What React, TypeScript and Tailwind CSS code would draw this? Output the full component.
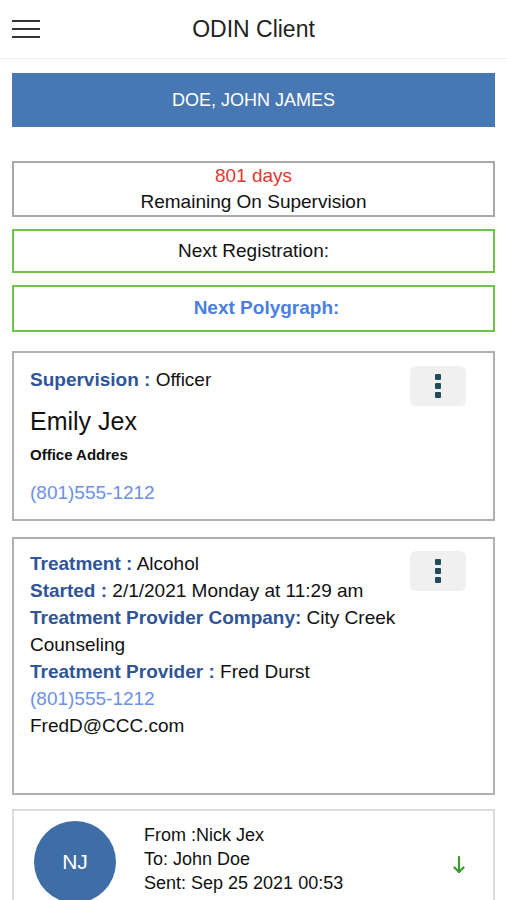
const KebabButton = () => (
  <button className="w-14 h-10 rounded-md bg-[#f0f0f0] flex items-center justify-center">
    <span className="flex flex-col gap-[3px]">
      <span className="w-[6px] h-[6px] bg-[#1f4d5c] rounded-[1px]" />
      <span className="w-[6px] h-[6px] bg-[#1f4d5c] rounded-[1px]" />
      <span className="w-[6px] h-[6px] bg-[#1f4d5c] rounded-[1px]" />
    </span>
  </button>
);

const Label = ({ children }: { children: React.ReactNode }) => (
  <span className="font-bold text-[#2f5597]">{children}</span>
);

export default function App() {
  return (
    <div className="min-h-[900px] bg-white font-['Liberation_Sans',Arial,sans-serif] text-[#111] overflow-hidden">
      {/* Header */}
      <header className="h-[59px] border-b border-[#ececec] flex items-center relative">
        <button className="absolute left-3 top-[20px] flex flex-col gap-[6px]">
          <span className="block w-[28px] h-[2px] bg-[#333]" />
          <span className="block w-[28px] h-[2px] bg-[#333]" />
          <span className="block w-[28px] h-[2px] bg-[#333]" />
        </button>
        <h1 className="w-full text-center text-[23px] text-[#222]">ODIN Client</h1>
      </header>

      <main className="px-3">
        {/* Client name */}
        <div className="mt-[14px] h-[54px] bg-[#4878b4] flex items-center justify-center text-white text-[18px]">
          DOE, JOHN JAMES
        </div>

        {/* Supervision remaining */}
        <div className="mt-[34px] h-[56px] border-2 border-[#a8a8a8] flex flex-col items-center justify-center text-[19px] leading-[26px]">
          <span className="text-[#e03a32]">801 days</span>
          <span>Remaining On Supervision</span>
        </div>

        <div className="mt-[12px] h-[44px] border-2 border-[#6cc44a] flex items-center justify-center text-[19px]">
          Next Registration:
        </div>

        <div className="mt-[12px] h-[47px] border-2 border-[#6cc44a] flex items-center justify-center pl-[26px] text-[19px] font-bold text-[#4a7fe0]">
          Next Polygraph:
        </div>

        {/* Officer card */}
        <div className="mt-[19px] h-[170px] border-2 border-[#b0b0b0] flex justify-between pl-[16px] pr-[27px] pt-[13px]">
          <div className="pt-[3px]">
            <div className="text-[19px] leading-[22px]">
              <Label>Supervision :</Label> Officer
            </div>
            <div className="mt-[17px] text-[25px] leading-[26px]">Emily Jex</div>
            <div className="mt-[12px] text-[15px] font-bold leading-[18px]">Office Addres</div>
            <div className="mt-[18px] text-[19px] leading-[22px] text-[#6b90e6]">(801)555-1212</div>
          </div>
          <KebabButton />
        </div>

        {/* Treatment card */}
        <div className="mt-[16px] h-[258px] border-2 border-[#b0b0b0] flex justify-between pl-[16px] pr-[27px] pt-[12px]">
          <div className="text-[19px] leading-[27px] -mt-[1px]">
            <div>
              <Label>Treatment :</Label> Alcohol
            </div>
            <div>
              <Label>Started :</Label> 2/1/2021 Monday at 11:29 am
            </div>
            <div className="w-[372px]">
              <Label>Treatment Provider Company:</Label> City Creek Counseling
            </div>
            <div>
              <Label>Treatment Provider :</Label> Fred Durst
            </div>
            <div className="text-[#6b90e6]">(801)555-1212</div>
            <div>FredD@CCC.com</div>
          </div>
          <div className="shrink-0">
            <KebabButton />
          </div>
        </div>

        {/* Message card */}
        <div className="mt-[14px] border-2 border-b-0 border-[#dcdcdc] flex items-start pl-[20px] pr-[28px] pt-[10px]">
          <div className="w-[82px] h-[82px] rounded-full bg-[#3f6ea6] flex items-center justify-center text-white text-[21px] shrink-0">
            NJ
          </div>
          <div className="ml-[28px] flex-1 text-[18px] leading-[24px] mt-[2px]">
            <div>From :Nick Jex</div>
            <div>To: John Doe</div>
            <div>Sent: Sep 25 2021 00:53</div>
            <div className="text-[#4caf3a]">Testing Testing</div>
          </div>
          <div className="self-center mt-[-10px] text-[#3a9a2e]">
            <svg width="12" height="18" viewBox="0 0 12 18" fill="none" stroke="currentColor" strokeWidth="2.2" strokeLinecap="round" strokeLinejoin="round">
              <path d="M6 1v15" />
              <path d="M1.5 11.5 6 16l4.5-4.5" />
            </svg>
          </div>
        </div>
      </main>
    </div>
  );
}
